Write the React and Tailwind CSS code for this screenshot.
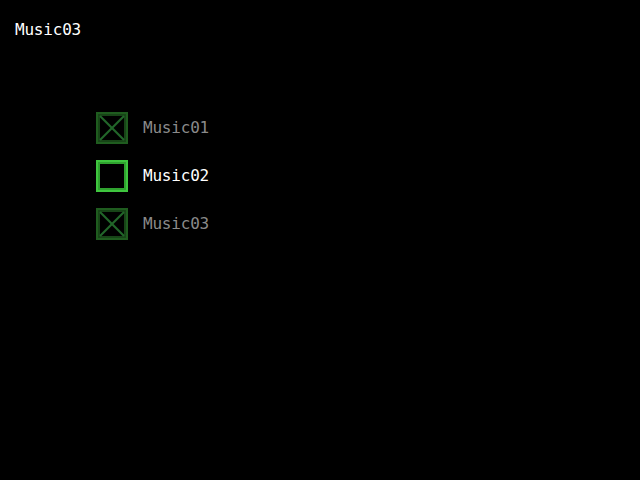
import { useState } from 'react';

const tracks = [
  { name: 'Music01', done: true },
  { name: 'Music02', done: false },
  { name: 'Music03', done: true },
];

const Box = ({ done, active }) => {
  const outer = active ? '#3fc63f' : '#1f5c1f';
  const inner = active ? '#2fa22f' : '#174417';
  return (
    <svg width="32" height="32" viewBox="0 0 32 32" className="shrink-0">
      <rect x="1" y="1" width="30" height="30" fill="none" stroke={outer} strokeWidth="2" />
      <rect x="3" y="3" width="26" height="26" fill="none" stroke={inner} strokeWidth="2" />
      {done && (
        <g stroke="#22662a" strokeWidth="2.2">
          <line x1="4" y1="4" x2="28" y2="28" />
          <line x1="28" y1="4" x2="4" y2="28" />
        </g>
      )}
    </svg>
  );
};

export default function App() {
  const [current] = useState(1);

  return (
    <div className="w-[640px] h-[480px] bg-black overflow-hidden font-['DejaVu_Sans_Mono',monospace] text-[16px] tracking-[-0.2px]">
      <div className="pl-[15px] pt-[20px] h-[40px] leading-[20px] text-white">
        {tracks[2].name}
      </div>

      <div className="ml-[96px] mt-[64px] flex flex-col">
        {tracks.map((t, i) => (
          <div key={t.name} className="h-[48px] flex items-center gap-[15px]">
            <Box done={t.done} active={i === current} />
            <span className={i === current ? 'text-white' : 'text-[#8a8a8a]'}>{t.name}</span>
          </div>
        ))}
      </div>
    </div>
  );
}
